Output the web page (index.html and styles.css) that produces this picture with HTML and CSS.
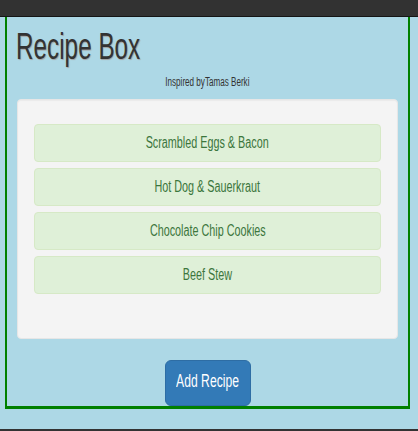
FILE: index.html
```html
<!DOCTYPE html>
<html lang="en">
<head>
<meta charset="utf-8">
<title>Recipe Box</title>
<link rel="stylesheet" href="styles.css">
</head>
<body>
<div class="topbar"></div>
<main class="box">
  <h1 class="title"><span class="title-text">Recipe Box</span></h1>
  <p class="credit"><span class="squeeze">Inspired byTamas Berki</span></p>
  <div class="well">
    <div class="recipe"><span class="squeeze">Scrambled Eggs &amp; Bacon</span></div>
    <div class="recipe"><span class="squeeze">Hot Dog &amp; Sauerkraut</span></div>
    <div class="recipe"><span class="squeeze">Chocolate Chip Cookies</span></div>
    <div class="recipe"><span class="squeeze">Beef Stew</span></div>
  </div>
  <div class="actions">
    <button class="btn-add" type="button"><span class="squeeze">Add Recipe</span></button>
  </div>
</main>
<div class="spacer"></div>
<div class="bottombar"></div>
</body>
</html>
```
FILE: styles.css
```css
html, body {
  margin: 0;
  padding: 0;
  height: 431px;
  overflow: hidden;
}
body {
  background: #add8e6;
  font-family: "Liberation Sans", Arial, sans-serif;
  color: #333;
}
.topbar {
  height: 16px;
  background: #323232;
  border-bottom: 1px solid #151515;
}
.box {
  margin-left: 5px;
  width: 405px;
  border-left: 2px solid #008000;
  border-right: 2px solid #008000;
  border-bottom: 3px solid #008000;
  padding: 10px 10px 0 10px;
  box-sizing: border-box;
}
.squeeze {
  display: inline-block;
  transform: scaleX(0.675);
  transform-origin: center;
  white-space: nowrap;
}
.title {
  margin: 0;
  font-size: 36px;
  line-height: 39.6px;
  font-weight: normal;
  color: #333;
  text-shadow: 1px 1px 1px #a3a3a3;
}
.title-text {
  display: inline-block;
  transform: scaleX(0.675);
  transform-origin: left center;
  white-space: nowrap;
  margin-left: -1px;
}
.credit {
  margin: 7px 0 0 0;
  text-align: center;
  font-size: 12px;
  line-height: 16px;
  color: #333;
}
.well {
  margin-top: 9px;
  background: #f4f4f4;
  border: 1px solid #e6e6e6;
  border-radius: 4px;
  padding: 24px 16px 44px 16px;
  display: flex;
  flex-direction: column;
  gap: 6px;
  box-shadow: inset 0 1px 1px rgba(0,0,0,0.04);
}
.recipe {
  background: #dff0d8;
  border: 1px solid #d6e9c6;
  border-radius: 4px;
  color: #3c763d;
  font-size: 16px;
  line-height: 36px;
  text-align: center;
}
.actions {
  margin-top: 21px;
  display: flex;
  justify-content: center;
}
.btn-add {
  width: 86px;
  height: 46px;
  padding: 8px 0 12px 0;
  box-sizing: border-box;
  background: #337ab7;
  border: 1px solid #2e6da4;
  border-radius: 6px;
  color: #fff;
  font-family: "Liberation Sans", Arial, sans-serif;
  font-size: 18px;
  line-height: 24px;
  display: flex;
  justify-content: center;
  align-items: flex-start;
}
.spacer {
  height: 20px;
}
.bottombar {
  height: 2px;
  background: #333;
}
```
